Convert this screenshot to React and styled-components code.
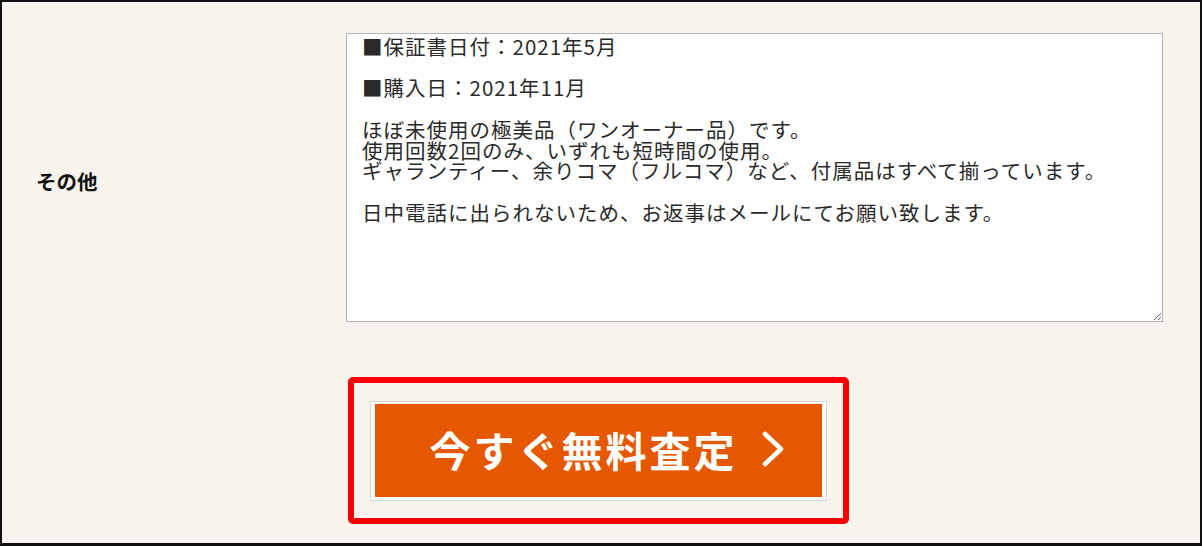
import styled, { createGlobalStyle } from "styled-components";

const GlobalStyle = createGlobalStyle`
  html, body {
    margin: 0;
    padding: 0;
    background: #000;
  }
  body {
    font-family: "Noto Sans CJK JP", "Noto Sans", sans-serif;
  }
`;

const note = `■保証書日付：2021年5月

■購入日：2021年11月

ほぼ未使用の極美品（ワンオーナー品）です。
使用回数2回のみ、いずれも短時間の使用。
ギャランティー、余りコマ（フルコマ）など、付属品はすべて揃っています。

日中電話に出られないため、お返事はメールにてお願い致します。`;

export default function App() {
  return (
    <>
      <GlobalStyle />
      <Frame>
        <Row>
          <Label>その他</Label>
          <Field>
            <TextBox defaultValue={note} />
          </Field>
        </Row>
        <ButtonArea>
          <Highlight>
            <ButtonWrap>
              <SubmitButton type="button">
                <span>今すぐ無料査定</span>
                <svg width="26" height="36" viewBox="0 0 26 36">
                  <path
                    d="M5 3 L21 18 L5 33"
                    fill="none"
                    stroke="#fff"
                    strokeWidth="4.5"
                    strokeLinecap="round"
                    strokeLinejoin="round"
                  />
                </svg>
              </SubmitButton>
            </ButtonWrap>
          </Highlight>
        </ButtonArea>
      </Frame>
    </>
  );
}

/* STYLES */
const Frame = styled.div`
  box-sizing: border-box;
  width: 1202px;
  height: 546px;
  border: 2px solid #111;
  border-bottom-width: 3px;
  background-color: #f7f4ed;
  box-shadow: inset 0 1px 0 #fff;
  display: flex;
  flex-direction: column;
  overflow: hidden;
`;

const Row = styled.div`
  display: flex;
  align-items: center;
  padding-top: 31px;
`;

const Label = styled.div`
  width: 310px;
  padding-left: 34px;
  font-size: 20.5px;
  font-weight: 700;
  color: #111;
  padding-top: 6px;
`;

const Field = styled.div`
  flex: 1;
  padding-right: 37px;
`;

const TextBox = styled.textarea`
  display: block;
  box-sizing: border-box;
  width: 817px;
  height: 289px;
  margin: 0;
  padding: 2px 15px;
  border: 1px solid #b4b4b4;
  background: #fff;
  font-family: "Noto Sans CJK JP", sans-serif;
  font-size: 20.5px;
  line-height: 20.7px;
  letter-spacing: 1px;
  color: #2a2a2a;
  overflow: hidden;
  resize: vertical;
`;

const ButtonArea = styled.div`
  display: flex;
  justify-content: center;
  padding-top: 55px;
  padding-right: 5px;
`;

const Highlight = styled.div`
  box-sizing: border-box;
  width: 501px;
  height: 147px;
  border: 6px solid #fb0000;
  border-radius: 5px;
  display: flex;
  align-items: center;
  justify-content: center;
`;

const ButtonWrap = styled.div`
  box-sizing: border-box;
  width: 457px;
  height: 100px;
  border: 1px solid #d6d6d6;
  background: #fff;
  padding: 2px 4px 3px 4px;
  display: flex;
`;

const SubmitButton = styled.button`
  flex: 1;
  border: none;
  margin: 0;
  background-color: #e65800;
  color: #fff;
  display: flex;
  align-items: center;
  justify-content: center;
  gap: 22px;
  padding: 0 0 2px 18px;
  font-family: "Noto Sans CJK JP", sans-serif;
  font-size: 41px;
  font-weight: 700;
  letter-spacing: 3px;
  cursor: pointer;
`;
